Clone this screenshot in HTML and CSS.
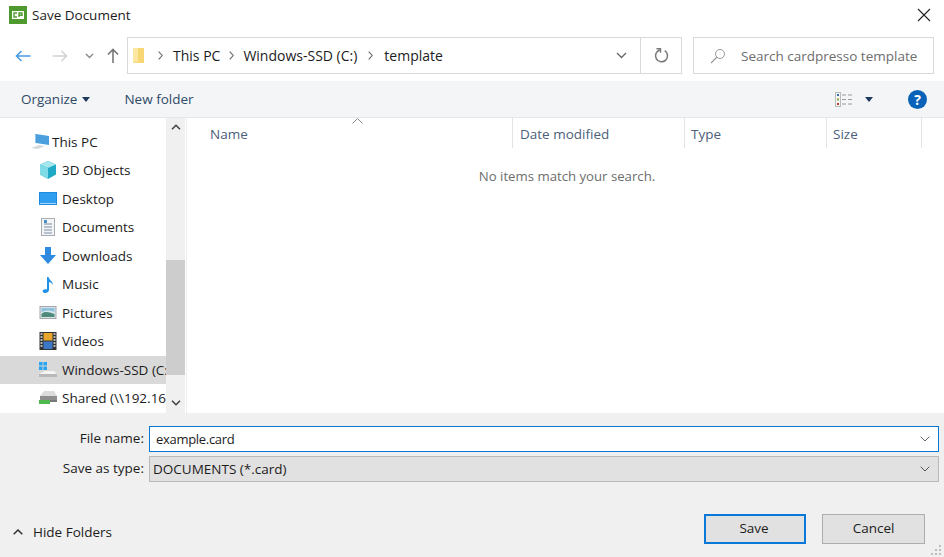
FILE: index.html
```html
<!DOCTYPE html>
<html>
<head>
    <title>Save Document</title>
    <link rel="stylesheet" href="styles.css">
</head>
<body>
<div class="dialog">

    <div class="titlebar">
        <svg class="app-icon" width="18" height="18" viewBox="0 0 18 18">
            <rect width="18" height="18" fill="#4f9a2f"/>
            <rect x="3" y="5" width="12" height="8" fill="#fff"/>
            <path d="M8 7H5v4h3M10 11V7h3v2.3h-3" fill="none" stroke="#4f9a2f" stroke-width="1.4"/>
        </svg>
        <span class="title">Save Document</span>
        <svg class="close" width="14" height="14" viewBox="0 0 14 14">
            <path d="M1 1l12 12M13 1L1 13" stroke="#222" stroke-width="1.1"/>
        </svg>
    </div>

    <div class="navbar">
        <div class="nav-buttons">
            <svg class="nav-back" width="16" height="12" viewBox="0 0 16 12"><path d="M15.5 6H1.5M6.5 1L1.5 6l5 5" fill="none" stroke="#4a9ae8" stroke-width="1.6"/></svg>
            <svg class="nav-forward" width="16" height="12" viewBox="0 0 16 12"><path d="M.5 6h14M9.5 1l5 5-5 5" fill="none" stroke="#d2d2d2" stroke-width="1.5"/></svg>
            <svg class="nav-recent" width="9" height="6" viewBox="0 0 9 6"><path d="M1 1l3.5 3.5L8 1" fill="none" stroke="#8a8a8a" stroke-width="1.4"/></svg>
            <svg class="nav-up" width="12" height="15" viewBox="0 0 12 15"><path d="M6 15V2M1 6.5L6 1.500l5 5" fill="none" stroke="#777" stroke-width="1.6"/></svg>
        </div>
        <div class="address">
            <svg class="crumb-folder" width="12" height="17" viewBox="0 0 12 17">
                <path d="M0 1h11v15H1l-1-1z" fill="#f7d774"/>
                <path d="M0 1h5v14H1l-1-1z" fill="#fbe6a2"/>
            </svg>
            <svg class="crumb-sep first" width="5" height="9" viewBox="0 0 5 9"><path d="M.7.7l3.500 3.800L.7 8.300" fill="none" stroke="#666" stroke-width="1.100"/></svg>
            <span>This PC</span>
            <svg class="crumb-sep" width="5" height="9" viewBox="0 0 5 9"><path d="M.7.7l3.500 3.800L.7 8.300" fill="none" stroke="#666" stroke-width="1.100"/></svg>
            <span>Windows-SSD (C:)</span>
            <svg class="crumb-sep last" width="5" height="9" viewBox="0 0 5 9"><path d="M.7.7l3.500 3.800L.7 8.300" fill="none" stroke="#666" stroke-width="1.100"/></svg>
            <span>template</span>
            <div class="address-end">
                <div class="address-drop">
                    <svg width="11" height="7" viewBox="0 0 11 7"><path d="M1 1l4.500 4.500L10 1" fill="none" stroke="#666" stroke-width="1.300"/></svg>
                </div>
                <div class="address-refresh">
                    <svg width="15" height="15" viewBox="0 0 15 15"><path d="M5 2.300a6 6 0 1 0 5 0" fill="none" stroke="#777" stroke-width="1.500" transform="rotate(8 7.500 8)"/><path d="M2.500 .8H6.500V4.800" fill="none" stroke="#777" stroke-width="1.400"/></svg>
                </div>
            </div>
        </div>
        <div class="search">
            <svg width="16" height="16" viewBox="0 0 16 16"><circle cx="10" cy="6" r="4.500" fill="none" stroke="#999" stroke-width="1"/><path d="M6.800 9.300L1 15" stroke="#999" stroke-width="1.200"/></svg>
            <span>Search cardpresso template</span>
        </div>
    </div>

    <div class="toolbar">
        <span class="tool organize">Organize</span>
        <i class="caret"></i>
        <span class="tool new-folder">New folder</span>
        <div class="tool-end">
            <svg width="18" height="15" viewBox="0 0 18 15">
                <rect x=".5" y=".5" width="5" height="14" fill="#f4f4f4" stroke="#bbb"/>
                <rect x="2" y="2" width="2" height="2" fill="#3a6ea5"/>
                <rect x="2" y="6.500" width="2" height="2" fill="#8aa53a"/>
                <rect x="2" y="11" width="2" height="2" fill="#c0392b"/>
                <path d="M7 3h4M13 3h4M7 7.500h4M13 7.500h4M7 12h4M13 12h4" stroke="#9a9a9a" stroke-width="1"/>
            </svg>
            <i class="caret view-caret"></i>
            <div class="help">?</div>
        </div>
    </div>

    <div class="main">
        <div class="sidebar">
            <div class="tree">
                <div class="row top-level">
                    <svg width="20" height="17" viewBox="0 0 20 17"><path d="M6 1l13 2v9L6 10z" fill="#4a9fdc"/><path d="M5 1l1 0v9l-1 0z" fill="#8fc5ea"/><path d="M1 15l8-3 6 1-7 3z" fill="#d5dadd"/></svg>
                    <span>This PC</span>
                </div>
                <div class="row">
                    <svg width="18" height="18" viewBox="0 0 18 18"><path d="M9 0l8 3.500v10L9 18l-8-4.500v-10z" fill="#1fa9c4"/><path d="M1 3.500L9 7l8-3.500L9 0z" fill="#a6e6ee"/><path d="M1 3.500L9 7v11l-8-4.500z" fill="#7fdbe6"/></svg>
                    <span>3D Objects</span>
                </div>
                <div class="row">
                    <svg width="18" height="13" viewBox="0 0 18 13"><rect width="18" height="13" fill="#1d8ae0"/><rect x="1" y="1" width="16" height="10" fill="#2f9df0"/><rect x="1" y="11" width="16" height="1" fill="#a8d6f7"/></svg>
                    <span>Desktop</span>
                </div>
                <div class="row">
                    <svg width="14" height="18" viewBox="0 0 14 18"><rect x=".5" y=".5" width="13" height="17" fill="#f2f4f6" stroke="#a8adb2"/><path d="M3 6h8M3 9h8M3 12h8M3 15h8" stroke="#7d8fa3"/><rect x="3" y="2" width="3" height="3" fill="#4a90c8"/></svg>
                    <span>Documents</span>
                </div>
                <div class="row">
                    <svg width="16" height="17" viewBox="0 0 16 17"><path d="M5 0h6v8h5l-8 9-8-9h5z" fill="#2f8be0"/></svg>
                    <span>Downloads</span>
                </div>
                <div class="row">
                    <svg width="12" height="17" viewBox="0 0 12 17" class="note"><path d="M5 1h1.500c.5 3 4.500 4 4.500 8-1-2-3-3-4-3v8c0 2-2 3-4 3S0 15.500 1 14.300 4 13 5 13.500z" fill="#1e90e8"/></svg>
                    <span>Music</span>
                </div>
                <div class="row">
                    <svg width="17" height="13" viewBox="0 0 17 13"><rect x=".5" y=".5" width="16" height="12" fill="#d8e6ee" stroke="#a5a5a5"/><path d="M2 8c3-3 7-2 13 0v3H2z" fill="#4d8a7a"/><path d="M2 2h13v4C10 4 6 4 2 6z" fill="#8fc0dc"/></svg>
                    <span>Pictures</span>
                </div>
                <div class="row">
                    <svg width="17" height="18" viewBox="0 0 17 18"><rect width="17" height="18" fill="#333"/><rect x="4" y="1" width="9" height="7.500" fill="#e8a52c"/><rect x="4" y="9.500" width="9" height="7.500" fill="#3c78c8"/><path d="M1 2h2M1 5h2M1 8h2M1 11h2M1 14h2M14 2h2M14 5h2M14 8h2M14 11h2M14 14h2" stroke="#ddd" stroke-width="1.400"/></svg>
                    <span>Videos</span>
                </div>
                <div class="row selected">
                    <svg width="18" height="16" viewBox="0 0 18 16"><path d="M0 0h3.600v3.600H0zM4.400 0H8v3.600H4.400zM0 4.400h3.600V8H0zM4.400 4.400H8V8H4.400z" fill="#29a4ee"/><path d="M0 12l6-3h9l3 3v2H0z" fill="#f4f4f4"/><path d="M0 12h18v3H0z" fill="#b8b8b8"/></svg>
                    <span>Windows-SSD (C:)</span>
                </div>
                <div class="row">
                    <svg width="18" height="14" viewBox="0 0 18 14"><path d="M5 0h10l3 5H1z" fill="#dcdcdc"/><path d="M1 5h17v4H1z" fill="#8f8f8f"/><path d="M0 9h11v4H0z" fill="#4fb84f"/><path d="M11 9h7v2h-7z" fill="#777"/></svg>
                    <span>Shared (\\192.16</span>
                </div>
            </div>
            <div class="scrollbar">
                <div class="sb-btn">
                    <svg width="10" height="6" viewBox="0 0 10 6"><path d="M1 5.300l4-4 4 4" fill="none" stroke="#444" stroke-width="1.600"/></svg>
                </div>
                <div class="sb-thumb"></div>
                <div class="sb-btn sb-down">
                    <svg width="10" height="6" viewBox="0 0 10 6"><path d="M1 .7l4 4 4-4" fill="none" stroke="#444" stroke-width="1.600"/></svg>
                </div>
            </div>
        </div>
        <div class="files">
            <div class="columns">
                <svg class="sort" width="11" height="6" viewBox="0 0 11 6"><path d="M.5 5.500l5-5 5 5" fill="none" stroke="#888" stroke-width="1"/></svg>
                <div class="col col-name">Name</div>
                <div class="col col-date">Date modified</div>
                <div class="col col-type">Type</div>
                <div class="col col-size">Size</div>
            </div>
            <div class="empty">No items match your search.</div>
        </div>
    </div>

    <div class="footer">
        <div class="fields">
            <label class="field-label">File name:</label>
            <div class="field input">
                <span class="field-value">example.card</span>
                <svg width="10" height="6" viewBox="0 0 10 6"><path d="M.7.7L5 5 9.300.7" fill="none" stroke="#666" stroke-width="1"/></svg>
            </div>
            <label class="field-label">Save as type:</label>
            <div class="field select">
                <span>DOCUMENTS (*.card)</span>
                <svg width="10" height="6" viewBox="0 0 10 6"><path d="M.7.7L5 5 9.300.7" fill="none" stroke="#555" stroke-width="1"/></svg>
            </div>
        </div>
        <div class="actions">
            <div class="hide-folders">
                <svg width="10" height="6" viewBox="0 0 10 6"><path d="M.7 5.300L5 1l4.300 4.300" fill="none" stroke="#333" stroke-width="1.500"/></svg>
                <span>Hide Folders</span>
            </div>
            <div class="btn default">Save</div>
            <div class="btn">Cancel</div>
        </div>
        <svg class="grip" width="11" height="11" viewBox="0 0 11 11"><path d="M8 0h2v2H8zM4 4h2v2H4zM8 4h2v2H8zM0 8h2v2H0zM4 8h2v2H4zM8 8h2v2H8z" fill="#bdbdbd"/></svg>
    </div>

</div>
</body>
</html>
```

FILE: styles.css
```css
html, body {
    margin: 0;
    padding: 0;
    background: #fff;
}

.dialog {
    width: 944px;
    height: 557px;
    display: flex;
    flex-direction: column;
    overflow: hidden;
    position: relative;
    font-family: "Open Sans", "Noto Sans", "Liberation Sans", sans-serif;
    font-size: 13.5px;
    color: #1c1c1c;
}

/* title bar */
.titlebar {
    height: 29px;
    padding-bottom: 2px;
    flex: none;
    display: flex;
    align-items: center;
    padding-left: 9px;
}
.app-icon {
    margin-right: 5px;
}
.close {
    margin-left: auto;
    margin-right: 13px;
}

/* nav row */
.navbar {
    height: 37px;
    margin-top: 6px;
    flex: none;
    display: flex;
    align-items: center;
}
.nav-buttons {
    width: 127px;
    flex: none;
    display: flex;
    align-items: center;
    padding-left: 15px;
    box-sizing: border-box;
}
.nav-forward { margin-left: 21px; }
.nav-recent { margin-left: 17px; }
.nav-up { margin-left: 13px; }

.address {
    width: 555px;
    height: 37px;
    box-sizing: border-box;
    border: 1px solid #d9d9d9;
    display: flex;
    align-items: center;
    padding-left: 5px;
    font-size: 14px;
}
.crumb-sep {
    margin: 0 9px;
}
.crumb-sep.first {
    margin: 0 10px 0 13px;
}
.crumb-sep.last {
    margin: 0 11px;
}
.address-end {
    margin-left: auto;
    display: flex;
    height: 100%;
}
.address-drop {
    width: 49px;
    display: flex;
    align-items: center;
    padding-left: 24px;
    box-sizing: border-box;
    border-right: 1px solid #d9d9d9;
}
.address-refresh {
    width: 40px;
    display: flex;
    align-items: center;
    justify-content: center;
}

.search {
    width: 241px;
    height: 37px;
    margin-left: 11px;
    box-sizing: border-box;
    border: 1px solid #d9d9d9;
    display: flex;
    align-items: center;
    padding-left: 16px;
    color: #6d6d6d;
}
.search svg {
    margin-right: 15px;
}

/* toolbar */
.toolbar {
    height: 36px;
    margin-top: 7px;
    flex: none;
    background: #f4f5f7;
    display: flex;
    align-items: center;
    padding-left: 21px;
    color: #2f4a68;
}
.caret {
    width: 0;
    height: 0;
    margin-left: 5px;
    border-left: 4.5px solid transparent;
    border-right: 4.5px solid transparent;
    border-top: 5px solid #1f3a5f;
}
.new-folder {
    margin-left: 34px;
}
.tool-end {
    margin-left: auto;
    display: flex;
    align-items: center;
    margin-right: 17px;
}
.view-caret {
    margin-left: 12px;
}
.help {
    width: 19px;
    height: 19px;
    margin-left: 35px;
    border-radius: 50%;
    background: #0a62b8;
    color: #fff;
    font-weight: 700;
    font-size: 14px;
    line-height: 19px;
    text-align: center;
}

/* main area */
.main {
    height: 296px;
    flex: none;
    display: flex;
    border-top: 1px solid #e6e6e6;
    box-sizing: border-box;
}
.sidebar {
    width: 187px;
    flex: none;
    display: flex;
    border-right: 1px solid #ededed;
    box-sizing: border-box;
}
.tree {
    width: 166px;
    flex: none;
    overflow: hidden;
    padding-top: 9.5px;
    box-sizing: border-box;
}
.row {
    height: 28.5px;
    display: flex;
    align-items: center;
    white-space: nowrap;
    padding-left: 39px;
}
.row svg {
    width: 18px;
    flex: none;
    margin-right: 5px;
}
.row.top-level {
    padding-left: 30px;
}
.row.top-level svg {
    width: 20px;
    margin-right: 2px;
}
.row.selected {
    background: #d9d9d9;
}

.scrollbar {
    width: 19px;
    flex: none;
    background: #f0f0f0;
    display: flex;
    flex-direction: column;
}
.sb-btn {
    height: 17px;
    flex: none;
    display: flex;
    align-items: center;
    justify-content: center;
}
.sb-thumb {
    height: 115px;
    margin-top: 125px;
    background: #cdcdcd;
}
.sb-down {
    margin-top: auto;
    padding-bottom: 2px;
}

.files {
    flex: 1;
    position: relative;
}
.columns {
    height: 30px;
    display: flex;
    color: #4c607a;
}
.sort {
    position: absolute;
    left: 165px;
    top: 0;
}
.col {
    box-sizing: border-box;
    border-right: 1px solid #e4e4e4;
    padding-left: 7px;
    line-height: 32px;
}
.col-name { width: 326px; padding-left: 23px; }
.col-date { width: 172px; }
.col-type { width: 142px; padding-left: 6px; }
.col-size { width: 95px; padding-left: 6px; }
.empty {
    margin-top: 19px;
    margin-left: 3px;
    text-align: center;
    font-size: 13.2px;
    color: #6d6d6d;
}

/* bottom panel */
.footer {
    flex: 1;
    background: #f0f0f0;
    position: relative;
    padding: 13px 5px 0 0;
}
.fields {
    display: grid;
    grid-template-columns: 144px 1fr;
    column-gap: 5px;
    row-gap: 4px;
}
.field-label {
    text-align: right;
    line-height: 25px;
}
.field {
    height: 26px;
    box-sizing: border-box;
    display: flex;
    align-items: center;
    justify-content: space-between;
    padding-right: 8px;
    padding-bottom: 1px;
}
.input {
    background: #fff;
    border: 1px solid #0a78d7;
    padding-left: 6px;
}
.field-value {
    font-size: 13px;
    letter-spacing: -0.3px;
}
.select {
    background: #e1e1e1;
    border: 1px solid #b9b9b9;
    padding-left: 3px;
}

.actions {
    display: flex;
    align-items: center;
    margin-top: 32px;
}
.hide-folders {
    display: flex;
    align-items: center;
    margin-left: 13px;
    margin-top: 5px;
    margin-right: auto;
}
.hide-folders svg {
    margin-right: 10px;
}
.btn {
    width: 103px;
    height: 30px;
    box-sizing: border-box;
    background: #e1e1e1;
    border: 1px solid #adadad;
    text-align: center;
    line-height: 27px;
    margin-left: 16px;
}
.btn.default {
    width: 102px;
    padding-right: 2px;
    border: 2px solid #0a78d7;
    line-height: 25px;
}
.actions .btn:last-child {
    margin-right: 14px;
}
.grip {
    position: absolute;
    right: 2px;
    bottom: 1px;
}
```
